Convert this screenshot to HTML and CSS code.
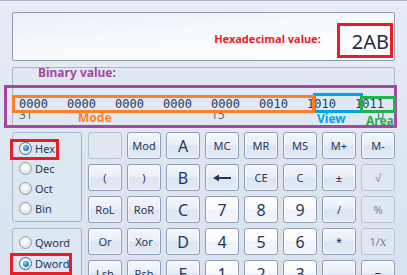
FILE: index.html
```html
<!DOCTYPE html>
<html>
<head>
<meta charset="utf-8">
<link rel="stylesheet" href="styles.css">
</head>
<body>
<div class="app">
  <div class="display">
    <span class="hex-label">Hexadecimal value:</span>
    <span class="value">2AB</span>
  </div>
  <div class="binary">
    <div class="bin-title">Binary value:</div>
    <div class="bits">
      <span>0000</span><span>0000</span><span>0000</span><span>0000</span><span>0000</span><span>0010</span><span>1010</span><span>1011</span>
    </div>
    <div class="bits idx">
      <span class="c1">31</span><span class="c5">15</span><span class="c8">0</span>
    </div>
  </div>
  <div class="main">
    <div class="side">
      <div class="group g1">
        <div class="radio"><span class="dot on"></span>Hex</div>
        <div class="radio"><span class="dot"></span>Dec</div>
        <div class="radio"><span class="dot"></span>Oct</div>
        <div class="radio"><span class="dot"></span>Bin</div>
      </div>
      <div class="group g2">
        <div class="radio"><span class="dot"></span>Qword</div>
        <div class="radio"><span class="dot on"></span>Dword</div>
      </div>
    </div>
    <div class="keys">
      <div class="key off"></div>
      <div class="key">Mod</div>
      <div class="key big">A</div>
      <div class="key">MC</div>
      <div class="key">MR</div>
      <div class="key">MS</div>
      <div class="key">M+</div>
      <div class="key">M-</div>

      <div class="key">(</div>
      <div class="key">)</div>
      <div class="key big">B</div>
      <div class="key"><svg class="back" width="18" height="8" viewBox="0 0 18 8"><path d="M0 4 L6 0.5 L6 7.5 Z" fill="#1e395b"/><rect x="5" y="3" width="13" height="2" fill="#1e395b"/></svg></div>
      <div class="key">CE</div>
      <div class="key">C</div>
      <div class="key">±</div>
      <div class="key off">√</div>

      <div class="key">RoL</div>
      <div class="key">RoR</div>
      <div class="key big">C</div>
      <div class="key big num">7</div>
      <div class="key big num">8</div>
      <div class="key big num">9</div>
      <div class="key">/</div>
      <div class="key off">%</div>

      <div class="key">Or</div>
      <div class="key">Xor</div>
      <div class="key big">D</div>
      <div class="key big num">4</div>
      <div class="key big num">5</div>
      <div class="key big num">6</div>
      <div class="key">*</div>
      <div class="key off inv">1/<i>x</i></div>

      <div class="key">Lsh</div>
      <div class="key">Rsh</div>
      <div class="key big">E</div>
      <div class="key big num">1</div>
      <div class="key big num">2</div>
      <div class="key big num">3</div>
      <div class="key">-</div>
      <div class="key">=</div>
    </div>
  </div>
</div>

<div class="mark m-purple"></div>
<div class="mark m-blue"></div>
<div class="mark m-orange"></div>
<div class="mark m-green"></div>
<div class="mark m-red1"></div>
<div class="mark m-red2"></div>
<div class="mark m-red3"></div>
<span class="tag t-mode">Mode</span>
<span class="tag t-view">View</span>
<span class="tag t-area">Area</span>
</body>
</html>
```

FILE: styles.css
```css
* { box-sizing: border-box; }
html { overflow: hidden; }
html, body { margin: 0; }
body {
  width: 407px;
  height: 275px;
  overflow: hidden;
  position: relative;
  background: linear-gradient(180deg, #e6edf6 0%, #dce6f1 60%, #d9e3ef 100%);
  font-family: "Noto Sans", "Open Sans", sans-serif;
  color: #1e395b;
}
.app {
  height: 275px;
  overflow: hidden;
  border-top: 1px solid #a9b5c4;
  padding: 11px 12px 0 12px;
}
.display {
  height: 49px;
  border: 1px solid #8e9bab;
  border-radius: 2px;
  background: linear-gradient(175deg, #e8eff8 0%, #f6f9fd 40%, #ffffff 100%);
  display: flex;
  align-items: flex-end;
  justify-content: flex-end;
  padding: 0 5px 6px 0;
}
.hex-label {
  color: #ed1c24;
  font-weight: bold;
  font-size: 11px;
  line-height: 14px;
  margin: 0 31px 8px 0;
}
.value {
  font-size: 20px;
  line-height: 24px;
  color: #1f2a3a;
}
.binary {
  margin-top: 6px;
  height: 61px;
  border: 1px solid #a8b6c7;
  border-radius: 2px;
  background: #dfe8f3;
  padding: 0 0 0 6px;
}
.bin-title {
  color: #a349a4;
  font-weight: bold;
  font-size: 12px;
  line-height: 14px;
  margin: -2px 0 0 19px;
}
.bits {
  display: grid;
  grid-template-columns: repeat(8, 29px);
  column-gap: 19px;
  font-family: "DejaVu Sans Mono", monospace;
  font-size: 12px;
  line-height: 14px;
  margin-top: 17px;
  color: #1e3a66;
}
.idx {
  font-family: "Noto Sans", sans-serif;
  color: #5b6b80;
  margin-top: -3px;
}
.idx .c1 { grid-column: 1; }
.idx .c5 { grid-column: 5; }
.idx .c8 { grid-column: 8; justify-self: end; }

.main {
  display: flex;
  gap: 6px;
  margin-top: 4px;
}
.side {
  width: 71px;
  display: flex;
  flex-direction: column;
  gap: 6px;
}
.group {
  border: 1px solid #a5b4c6;
  border-radius: 3px;
  background: #dde7f2;
  padding: 5px 0 0 6px;
}
.g1 { height: 90px; }
.g2 { height: 60px; padding-top: 3px; }
.g2 .radio { height: 21px; }
.radio {
  display: flex;
  align-items: center;
  gap: 3px;
  height: 20px;
  font-size: 11px;
  color: #1e395b;
}
.dot {
  width: 13px;
  height: 13px;
  border-radius: 50%;
  border: 1px solid #9a9c9e;
  background: radial-gradient(circle at 45% 40%, #ffffff 0%, #eceeef 45%, #c9cbcd 100%);
  position: relative;
  flex: none;
}
.dot.on {
  border-color: #3f6d96;
  background: radial-gradient(circle at 45% 40%, #ffffff 0%, #e6edf4 60%, #b8c8d8 100%);
}
.dot.on::after {
  content: "";
  position: absolute;
  left: 2.5px;
  top: 2.5px;
  width: 6px;
  height: 6px;
  border-radius: 50%;
  background: radial-gradient(circle at 40% 35%, #8fd0f7 0%, #2a86c8 55%, #0c4d86 100%);
}

.keys {
  display: grid;
  grid-template-columns: repeat(8, 34px);
  grid-auto-rows: 27px;
  gap: 5px;
}
.key {
  border: 1px solid #8f9eb2;
  border-radius: 3px;
  background: linear-gradient(180deg, #f4f7fb 0%, #e9eff6 48%, #dce5f0 52%, #e3eaf3 100%);
  display: flex;
  align-items: center;
  justify-content: center;
  font-size: 11px;
  color: #1e395b;
  box-shadow: inset 0 0 0 1px rgba(255,255,255,0.55);
}
.key.big { font-size: 16px; }
.key.num {
  background: linear-gradient(180deg, #ffffff 0%, #f8fafd 48%, #eef3f9 52%, #f3f6fb 100%);
}
.key.off {
  border-color: #b6c3d2;
  color: #7589a0;
  background: #dfe7f1;
  box-shadow: none;
}
.key.inv i {
  font-family: "DejaVu Serif", "Liberation Serif", serif;
  font-style: italic;
  font-size: 12px;
}

.mark {
  position: absolute;
  border: 3px solid;
}
.m-red1 { left: 337px; top: 23px; width: 56px; height: 35px; border-color: #ed1c24; }
.m-purple { left: 4px; top: 85px; width: 393px; height: 43px; border-color: #a349a4; }
.m-orange { left: 12px; top: 95px; width: 303px; height: 18px; border-color: #ff7f27; }
.m-blue { left: 313px; top: 93px; width: 50px; height: 20px; border-color: #00a2e8; }
.m-green { left: 360px; top: 96px; width: 36px; height: 17px; border-color: #22b14c; }
.m-red2 { left: 10px; top: 139px; width: 49px; height: 21px; border-color: #ed1c24; }
.m-red3 { left: 10px; top: 253px; width: 62px; height: 22px; border-color: #ed1c24; }

.tag {
  position: absolute;
  font-weight: bold;
  font-size: 12px;
  line-height: 14px;
}
.t-mode { left: 78px; top: 111px; color: #ff7f27; }
.t-view { left: 317px; top: 112px; color: #00a2e8; }
.t-area { left: 366px; top: 114px; color: #22b14c; }
```
